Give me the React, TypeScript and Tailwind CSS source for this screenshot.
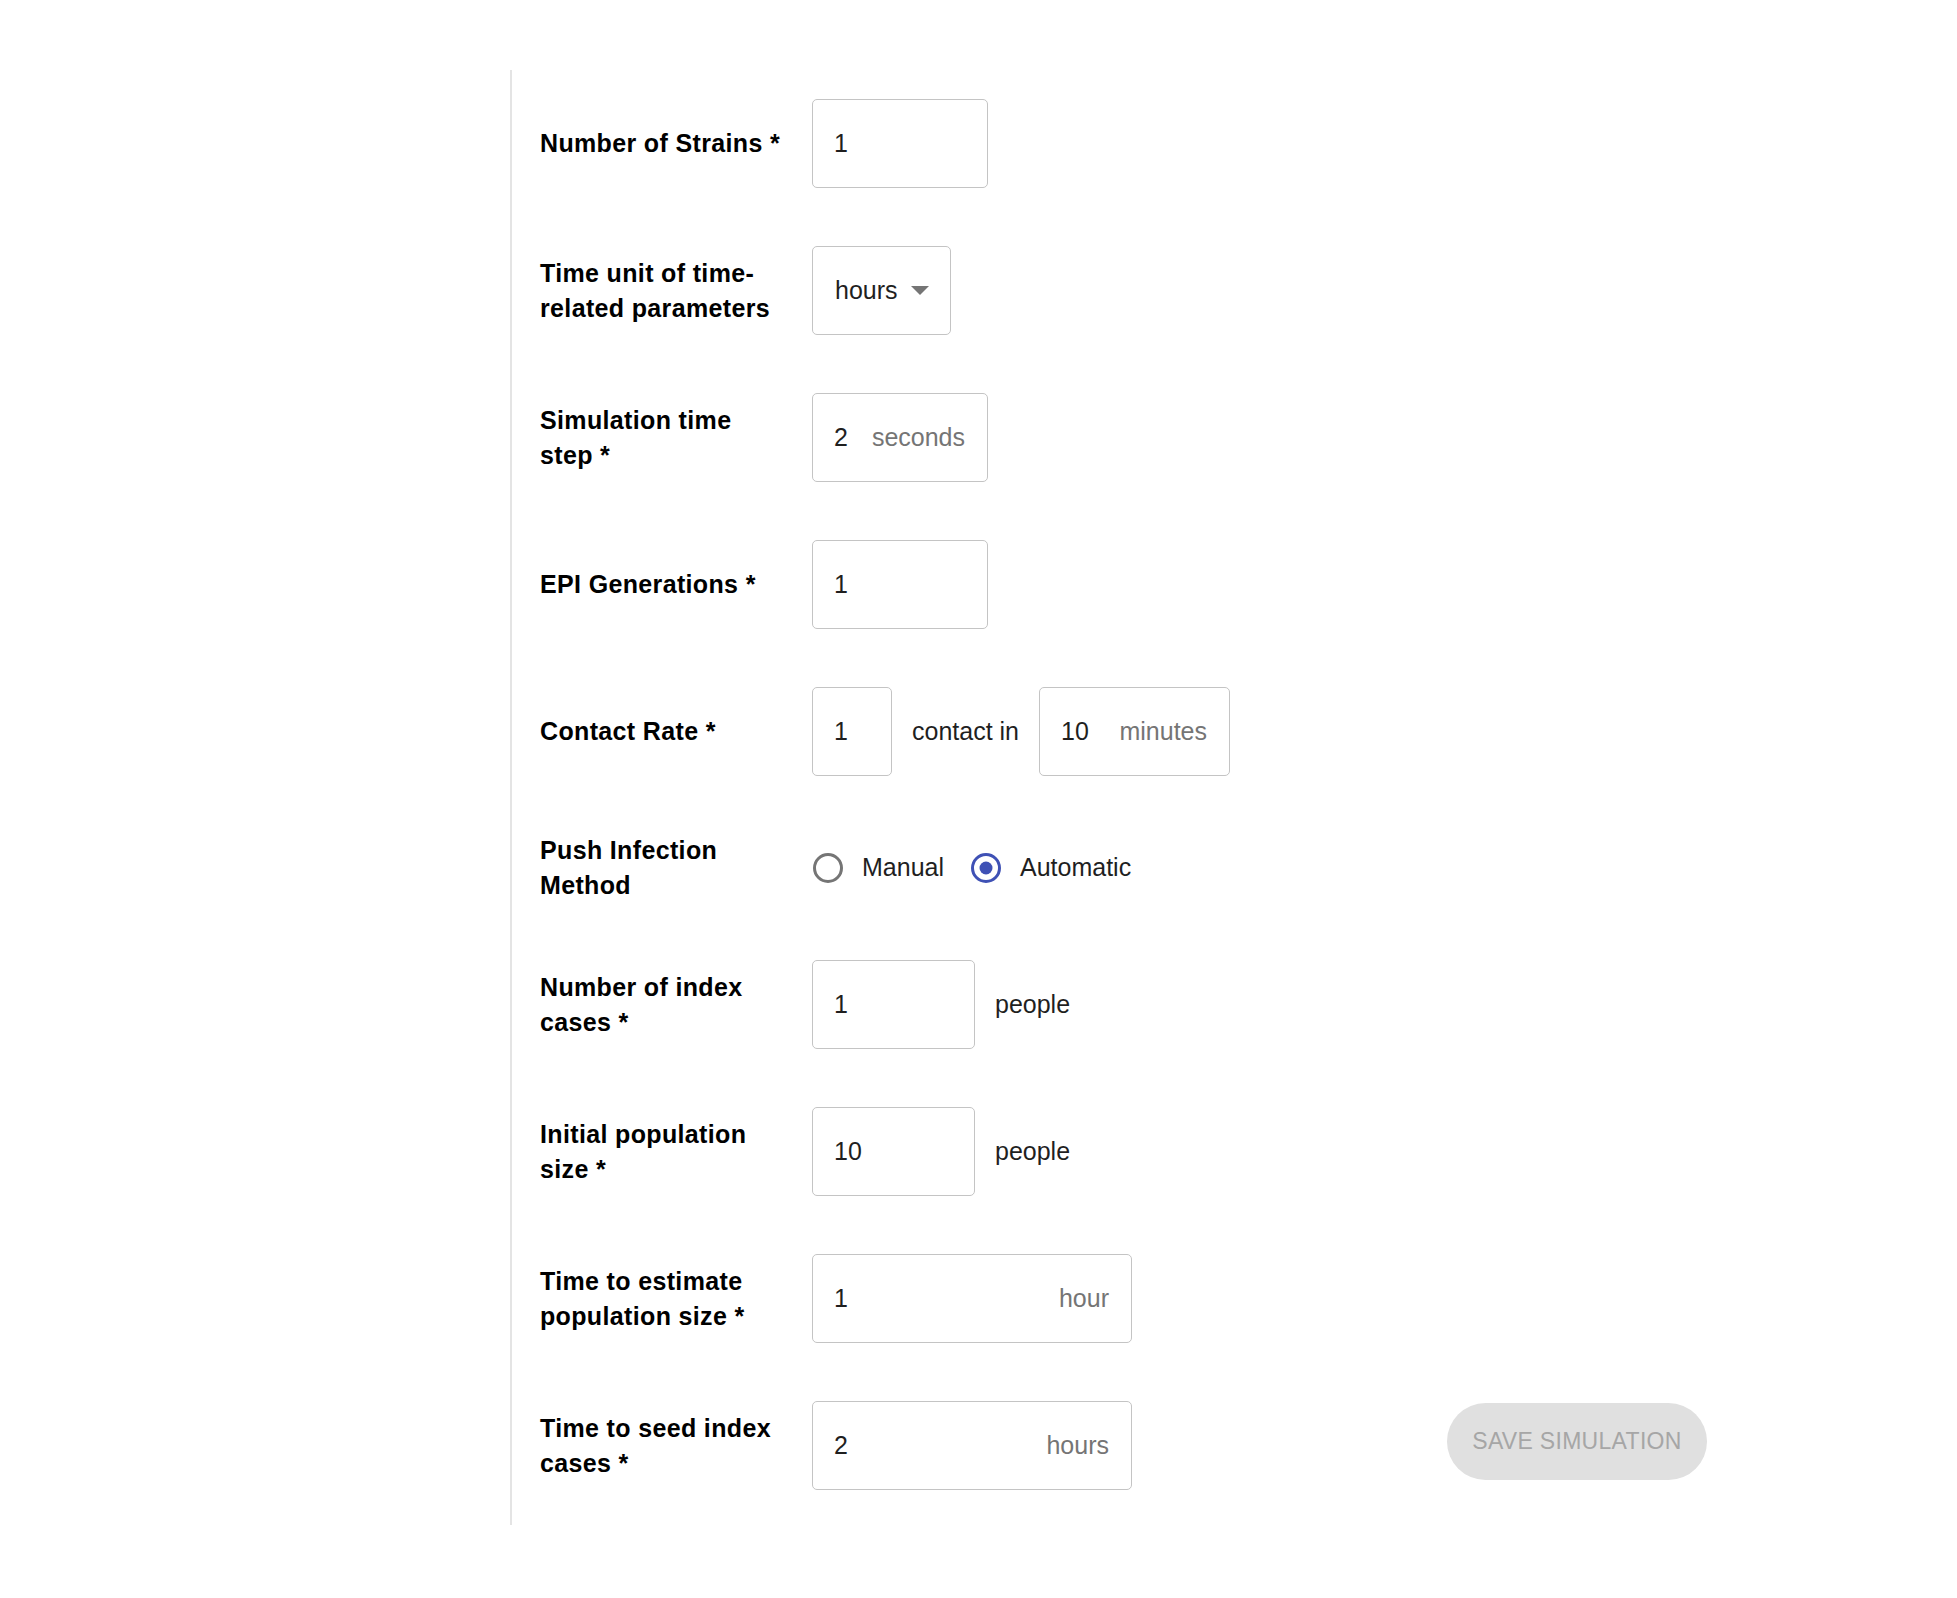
const FONT = "font-['Liberation_Sans',Arial,sans-serif]"

function Label({ children }: { children: React.ReactNode }) {
  return (
    <div className="w-[245px] shrink-0 mr-[27px] text-[25px] leading-[35px] font-bold tracking-[0.35px] text-black">
      {children}
    </div>
  )
}

function Field({ value, suffix, width }: { value: string; suffix?: string; width: string }) {
  return (
    <div
      className={`${width} h-[89px] flex items-center pl-[21px] pr-[22px] border border-[#c4c4c4] rounded-[5px] text-[25px] bg-white`}
    >
      <span className="flex-1 text-[#1f1f1f]">{value}</span>
      {suffix && <span className="text-[#757575]">{suffix}</span>}
    </div>
  )
}

function Radio({ checked, label }: { checked: boolean; label: string }) {
  return (
    <label className="flex items-center">
      <svg width="32" height="32" viewBox="0 0 32 32" className="shrink-0">
        <circle
          cx="16"
          cy="16"
          r="13.5"
          fill="none"
          stroke={checked ? '#3f51b5' : '#757575'}
          strokeWidth="3"
        />
        {checked && <circle cx="16" cy="16" r="6.5" fill="#3f51b5" />}
      </svg>
      <span className="ml-[18px] text-[25px] text-[#1f1f1f]">{label}</span>
    </label>
  )
}

export default function App() {
  return (
    <div className={`${FONT} bg-white min-h-[1598px] pt-[70px]`}>
      <div className="ml-[510px] w-[1197px] h-[1455px] border-l-2 border-[#e4e4e4] pl-[28px] pt-[29px] flex">
        <div className="flex flex-col gap-[58px]">
          <div className="flex items-center">
            <Label>Number of Strains *</Label>
            <Field value="1" width="w-[176px]" />
          </div>

          <div className="flex items-center">
            <Label>Time unit of time-related parameters</Label>
            <div className="w-[139px] h-[89px] flex items-center pl-[22px] pr-[21px] border border-[#c4c4c4] rounded-[5px] text-[25px]">
              <span className="flex-1 text-[#1f1f1f]">hours</span>
              <svg width="18" height="9" viewBox="0 0 18 9">
                <path d="M0 0 L18 0 L9 9 Z" fill="#757575" />
              </svg>
            </div>
          </div>

          <div className="flex items-center">
            <Label>Simulation time step *</Label>
            <Field value="2" suffix="seconds" width="w-[176px]" />
          </div>

          <div className="flex items-center">
            <Label>EPI Generations *</Label>
            <Field value="1" width="w-[176px]" />
          </div>

          <div className="flex items-center">
            <Label>Contact Rate *</Label>
            <Field value="1" width="w-[80px]" />
            <span className="mx-[20px] text-[25px] text-[#1f1f1f]">contact in</span>
            <Field value="10" suffix="minutes" width="w-[191px]" />
          </div>

          <div className="flex items-center h-[68px]">
            <Label>Push Infection Method</Label>
            <div className="flex items-center gap-[26px]">
              <Radio checked={false} label="Manual" />
              <Radio checked label="Automatic" />
            </div>
          </div>

          <div className="flex items-center">
            <Label>Number of index cases *</Label>
            <Field value="1" width="w-[163px]" />
            <span className="ml-[20px] text-[25px] text-[#1f1f1f]">people</span>
          </div>

          <div className="flex items-center">
            <Label>Initial population size *</Label>
            <Field value="10" width="w-[163px]" />
            <span className="ml-[20px] text-[25px] text-[#1f1f1f]">people</span>
          </div>

          <div className="flex items-center">
            <Label>Time to estimate population size *</Label>
            <Field value="1" suffix="hour" width="w-[320px]" />
          </div>

          <div className="flex items-center">
            <Label>Time to seed index cases *</Label>
            <Field value="2" suffix="hours" width="w-[320px]" />
          </div>
        </div>

        <div className="ml-auto self-end mb-[45px]">
          <button
            disabled
            className="w-[260px] h-[77px] rounded-full bg-[#e0e0e0] text-[#a6a6a6] text-[23px] tracking-[0.3px] uppercase"
          >
            Save Simulation
          </button>
        </div>
      </div>
    </div>
  )
}
